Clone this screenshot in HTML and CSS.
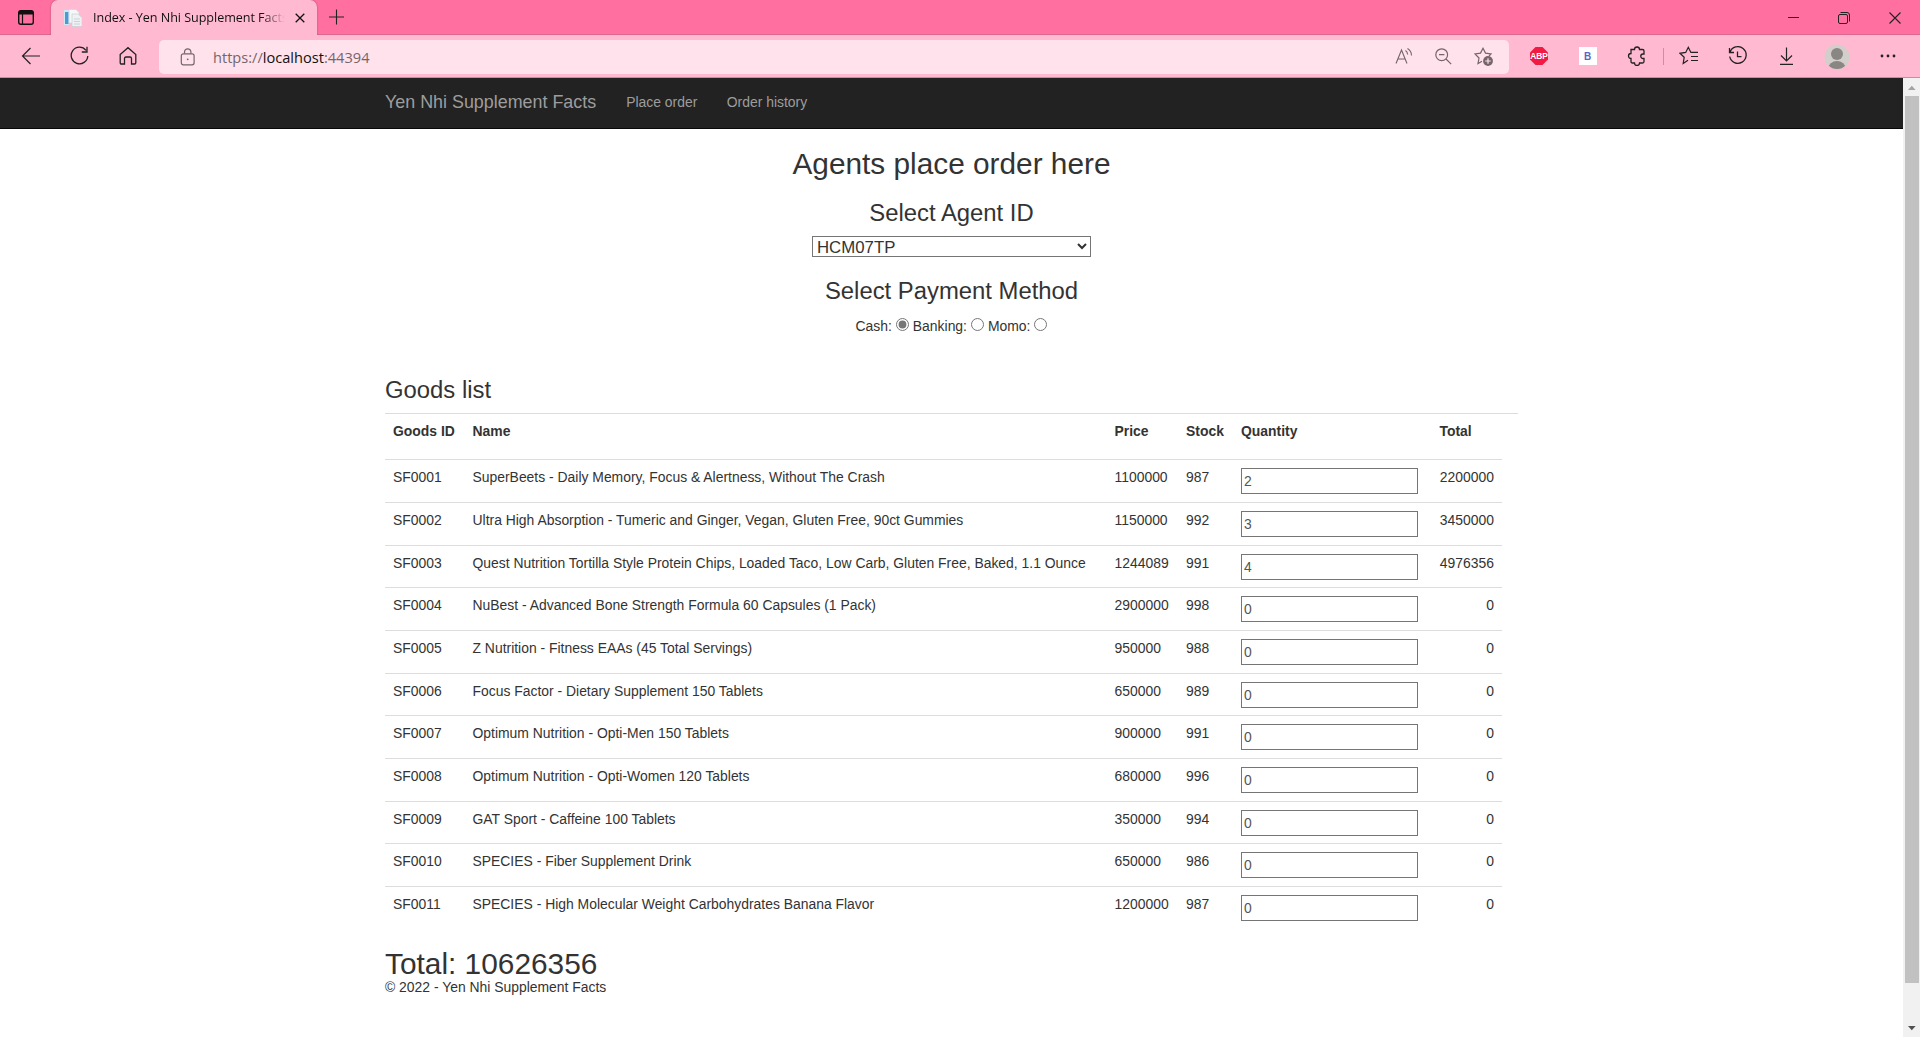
FILE: index.html
```html
<!DOCTYPE html>
<html lang="en">
<head>
<meta charset="utf-8">
<title>Index - Yen Nhi Supplement Facts</title>
<link rel="stylesheet" href="styles.css">
</head>
<body>
<div class="titlebar">
  <div class="tab-menu"><svg width="18" height="18" viewBox="0 0 18 18"><rect x="1.7" y="1.7" width="14.6" height="13.6" rx="2.2" fill="none" stroke="#111" stroke-width="1.4"/><path d="M1.5 5.5V4a2.5 2.5 0 0 1 2.5-2.5h10A2.5 2.5 0 0 1 16.5 4v1.5z" fill="#111"/><path d="M5.5 5v10" stroke="#111" stroke-width="1.2"/></svg></div>
  <div class="tab">
    <svg class="favicon" width="18" height="18" viewBox="0 0 18 18"><path d="M0 1h5v15H0z" fill="#cfe8f5"/><path d="M1 3h3.500v12H1z" fill="#4b9bd0"/><path d="M5 .5h7l3 3V14H5z" fill="#f5f7f8" stroke="#ccd5da" stroke-width=".6"/><path d="M8 5h6l4 3.500V17.500H8z" fill="#eef2f4" stroke="#c3ccd2" stroke-width=".6"/><path d="M10 10h6M10 12.500h6M10 15h6" stroke="#c9d4da"/></svg>
    <span class="tab-title">Index - Yen Nhi Supplement Facts</span>
    <svg class="tab-close" width="10" height="10" viewBox="0 0 10 10"><path d="M.7.7l8.600 8.600M9.300.7L.7 9.300" stroke="#111" stroke-width="1.300"/></svg>
  </div>
  <svg class="new-tab" width="16" height="16" viewBox="0 0 16 16"><path d="M7.500 .5v15M0 8h15" stroke="#222" stroke-width="1.100"/></svg>
  <div class="window-buttons">
    <svg width="12" height="12" viewBox="0 0 12 12"><path d="M1 5.500h11" stroke="#222"/></svg>
    <svg width="12" height="12" viewBox="0 0 12 12" fill="none" stroke="#222"><rect x=".5" y="2.500" width="9" height="9" rx="1.500"/><path d="M2.500.5H9A2.500 2.500 0 0 1 11.500 3v6.500"/></svg>
    <svg width="12" height="12" viewBox="0 0 12 12"><path d="M.5.5l11 11M11.500.5l-11 11" stroke="#222" stroke-width="1.100"/></svg>
  </div>
</div>
<div class="toolbar">
  <div class="nav-buttons">
    <svg width="20" height="20" viewBox="0 0 20 20" fill="none" stroke="#222" stroke-width="1.200"><path d="M19 10H1.500M9.500 2L1.500 10l8 8"/></svg>
    <svg width="20" height="20" viewBox="0 0 20 20" fill="none" stroke="#222" stroke-width="1.300"><path d="M16 4.300A8.300 8.300 0 1 0 17.800 10M17 .8v5.200h-5.200"/></svg>
    <svg width="20" height="20" viewBox="0 0 20 20" fill="none" stroke="#222" stroke-width="1.300"><path d="M2.200 8.500L10 1.700l7.800 6.800v8.200q0 1.300-1.300 1.300h-3v-5.500q0-1.500-1.500-1.500h-4q-1.500 0-1.500 1.500V18h-3q-1.300 0-1.300-1.300z"/></svg>
  </div>
  <div class="address">
    <svg class="lock" width="16" height="18" viewBox="0 0 16 18" fill="none" stroke="#75656b" stroke-width="1.200"><rect x="1.300" y="5.800" width="12.800" height="11" rx="2"/><path d="M4.500 5.500V4a3.200 3.200 0 0 1 6.400 0v1.500"/><circle cx="7.700" cy="11.300" r=".9" fill="#75656b" stroke="none"/></svg>
    <span class="url">https://<b>localhost</b>:44394</span>
    <div class="address-actions">
      <svg width="20" height="20" viewBox="0 0 20 20" fill="none" stroke="#75656b" stroke-width="1.100"><path d="M2 16.500L7.500 3l5.500 13.500M3.700 12h7.600M11.500 3.500q2 1.500 2.200 4M13.500 1.500q4 2.500 4 7"/></svg>
      <svg width="20" height="20" viewBox="0 0 20 20" fill="none" stroke="#75656b" stroke-width="1.200"><circle cx="7.700" cy="7.700" r="5.900"/><path d="M12 12l5.200 5.200M5 7.700h5.400"/></svg>
      <svg width="20" height="20" viewBox="0 0 20 20" fill="none" stroke="#75656b" stroke-width="1.200"><path d="M8 14.300L4 16.500l1-5.500L1 7l5.500-.9L9 1.300l2.500 4.800 5.500.9-2 2"/><circle cx="14" cy="14" r="4.900" fill="#75656b" stroke="none"/><path d="M14 11.200v5.600M11.200 14h5.600" stroke="#ffe2eb"/></svg>
    </div>
  </div>
  <div class="extensions">
    <div class="slot"><svg width="20" height="20" viewBox="0 0 20 20"><path d="M6.500 1h7l5.500 5.500v7L13.500 19h-7L1 13.500v-7z" fill="#f01a42"/><text x="10" y="13.300" text-anchor="middle" class="abp">ABP</text></svg></div>
    <div class="slot"><span class="ext-b">B</span></div>
    <div class="slot"><svg width="20" height="20" viewBox="0 0 20 20" fill="none" stroke="#222" stroke-width="1.300"><path d="M4 3.500h3.500a2.500 2.500 0 0 1 5 0H15.500q1.500 0 1.500 1.500v3h-1a2 2 0 0 0 0 4.500h1v3q0 1.500-1.500 1.500H12.500a2.500 2.500 0 0 1-5 0H5.500Q4 17 4 15.500V12.500a2.300 2.300 0 0 1 0-5z"/></svg></div>
    <div class="divider"></div>
    <div class="slot"><svg width="20" height="20" viewBox="0 0 20 20" fill="none" stroke="#222" stroke-width="1.200"><path d="M9 14.300L4.200 17.500l1-6.300L1 7.300l5.700-.9L9.300 1.300l2.600 5.100H19M12 10.500h7M12 14.500h7"/></svg></div>
    <div class="slot"><svg width="20" height="20" viewBox="0 0 20 20" fill="none" stroke="#222" stroke-width="1.300"><path d="M1.500 2v4.500H6M2 6.300A8.300 8.300 0 1 1 1.700 10.500M9.500 5.500v5.200h4"/></svg></div>
    <div class="slot"><svg width="20" height="20" viewBox="0 0 20 20" fill="none" stroke="#222" stroke-width="1.200"><path d="M9.500 1.500v13.500M4 9.500L9.500 15l5.500-5.500M3 18.300h13"/></svg></div>
    <div class="slot avatar"><svg width="26" height="26" viewBox="0 0 26 26"><defs><clipPath id="disc"><circle cx="13" cy="13" r="12"/></clipPath></defs><circle cx="13" cy="13" r="12.500" fill="#d2cecb"/><g fill="#898683" clip-path="url(#disc)"><circle cx="13" cy="10" r="6"/><ellipse cx="13" cy="24.500" rx="8.700" ry="7.500"/></g></svg></div>
    <div class="slot"><svg width="20" height="20" viewBox="0 0 20 20" fill="#222"><circle cx="5" cy="10" r="1.400"/><circle cx="11" cy="10" r="1.400"/><circle cx="17" cy="10" r="1.400"/></svg></div>
  </div>
</div>
<div class="viewport">
  <div class="page">
    <nav class="navbar"><div class="container nav-row">
      <a class="brand">Yen Nhi Supplement Facts</a><a class="link">Place order</a><a class="link">Order history</a>
    </div></nav>
    <main class="container">
      <section class="order-form">
        <h2>Agents place order here</h2>
        <h3>Select Agent ID</h3>
        <select class="agent"><option>HCM07TP</option></select>
        <h3 class="payment-heading">Select Payment Method</h3>
        <div class="payment">
          <label>Cash: <input type="radio" name="pay" checked></label>
          <label>Banking: <input type="radio" name="pay"></label>
          <label>Momo: <input type="radio" name="pay"></label>
        </div>
      </section>
      <h3 class="goods-heading">Goods list</h3>
      <table class="goods">
        <colgroup><col class="c-id"><col class="c-name"><col class="c-price"><col class="c-stock"><col class="c-qty"><col class="c-total"></colgroup>
        <thead><tr><th>Goods ID</th><th>Name</th><th>Price</th><th>Stock</th><th>Quantity</th><th>Total</th></tr></thead>
        <tbody>
          <tr><td>SF0001</td><td>SuperBeets - Daily Memory, Focus &amp; Alertness, Without The Crash</td><td>1100000</td><td>987</td><td><input class="qty" value="2"></td><td>2200000</td></tr>
          <tr><td>SF0002</td><td>Ultra High Absorption - Tumeric and Ginger, Vegan, Gluten Free, 90ct Gummies</td><td>1150000</td><td>992</td><td><input class="qty" value="3"></td><td>3450000</td></tr>
          <tr><td>SF0003</td><td>Quest Nutrition Tortilla Style Protein Chips, Loaded Taco, Low Carb, Gluten Free, Baked, 1.1 Ounce</td><td>1244089</td><td>991</td><td><input class="qty" value="4"></td><td>4976356</td></tr>
          <tr><td>SF0004</td><td>NuBest - Advanced Bone Strength Formula 60 Capsules (1 Pack)</td><td>2900000</td><td>998</td><td><input class="qty" value="0"></td><td>0</td></tr>
          <tr><td>SF0005</td><td>Z Nutrition - Fitness EAAs (45 Total Servings)</td><td>950000</td><td>988</td><td><input class="qty" value="0"></td><td>0</td></tr>
          <tr><td>SF0006</td><td>Focus Factor - Dietary Supplement 150 Tablets</td><td>650000</td><td>989</td><td><input class="qty" value="0"></td><td>0</td></tr>
          <tr><td>SF0007</td><td>Optimum Nutrition - Opti-Men 150 Tablets</td><td>900000</td><td>991</td><td><input class="qty" value="0"></td><td>0</td></tr>
          <tr><td>SF0008</td><td>Optimum Nutrition - Opti-Women 120 Tablets</td><td>680000</td><td>996</td><td><input class="qty" value="0"></td><td>0</td></tr>
          <tr><td>SF0009</td><td>GAT Sport - Caffeine 100 Tablets</td><td>350000</td><td>994</td><td><input class="qty" value="0"></td><td>0</td></tr>
          <tr><td>SF0010</td><td>SPECIES - Fiber Supplement Drink</td><td>650000</td><td>986</td><td><input class="qty" value="0"></td><td>0</td></tr>
          <tr><td>SF0011</td><td>SPECIES - High Molecular Weight Carbohydrates Banana Flavor</td><td>1200000</td><td>987</td><td><input class="qty" value="0"></td><td>0</td></tr>
        </tbody>
      </table>
      <div class="grand-total">Total: 10626356</div>
      <footer>© 2022 - Yen Nhi Supplement Facts</footer>
    </main>
  </div>
  <div class="scrollbar">
    <svg width="17" height="18" viewBox="0 0 17 18"><path d="M5 12l3.800-4.200L12.600 12z" fill="#a3a3a3"/></svg>
    <div class="thumb"></div>
    <svg class="down" width="17" height="18" viewBox="0 0 17 18"><path d="M5 7l3.800 4.200L12.600 7z" fill="#505050"/></svg>
  </div>
</div>
</body>
</html>
```
FILE: styles.css
```css
* { box-sizing: border-box; }
body { margin: 0; height: 1037px; overflow: hidden; display: flex; flex-direction: column; background: #fff; color: #333; font: 13.92px/20px "Liberation Sans", Arial, sans-serif; }
svg { display: block; flex: none; }
h2, h3 { margin: 0; font-weight: 400; }

/* Browser chrome */
.titlebar { height: 35px; flex: none; display: flex; background: #ff70a0; border-bottom: 1px solid #dc6890; font-family: "Open Sans", sans-serif; color: #111; }
.tab-menu { width: 51px; padding: 9px 0 0 17px; }
.tab { width: 266px; height: 35px; display: flex; align-items: flex-start; background: #ffbad1; border-radius: 7px 7px 0 0; box-shadow: 0 0 2px #a04468; clip-path: inset(0 -3px 0 -3px); }
.favicon { margin: 9px 0 0 13px; }
.tab-title { margin: 8px 0 0 11px; width: 192px; overflow: hidden; white-space: nowrap; font-size: 12.6px; line-height: 19px; letter-spacing: -.05px; -webkit-mask-image: linear-gradient(90deg, #000 88%, transparent); mask-image: linear-gradient(90deg, #000 88%, transparent); }
.tab-close { margin: 13px 0 0 10px; }
.new-tab { margin: 9px 0 0 12px; }
.window-buttons { margin-left: auto; padding: 12px 19px 0 0; display: flex; gap: 39px; }
.toolbar { height: 43px; flex: none; display: flex; align-items: flex-start; background: #ffbad1; border-bottom: 1px solid #c88ba0; }
.nav-buttons { width: 159px; padding: 11px 0 0 21px; display: flex; gap: 28.5px; }
.address { margin-top: 5px; width: 1350px; height: 34px; display: flex; background: #ffe2eb; border-radius: 5px; }
.lock { margin: 8px 0 0 21px; }
.url { margin-left: 17px; font: 14.6px/34px "Open Sans", sans-serif; color: #75656b; }
.url b { font-weight: 400; color: #111; }
.address-actions { margin-left: auto; padding: 7px 15px 0 0; display: flex; gap: 20px; }
.extensions { height: 42px; padding-left: 5px; display: flex; align-items: center; }
.slot { width: 49px; display: flex; justify-content: center; }
.avatar { margin: 2px 1px 0; }
.divider { width: 1px; height: 17px; background: #c98fa2; margin: 0 1px 0 1.5px; }
.abp { font: 700 8.4px "Liberation Sans", sans-serif; fill: #fff; }
.ext-b { width: 18px; height: 18px; background: #fff; color: #5c62c4; font: 700 10px/19px "Liberation Sans", sans-serif; text-align: center; }

/* Page */
.viewport { flex: 1; display: flex; min-height: 0; }
.page { flex: 1; }
.container { width: 1133px; margin: 0 auto; }
.navbar { height: 51px; background: #222; border-bottom: 1px solid #080808; }
.nav-row { display: flex; color: #9d9d9d; }
.brand { font-size: 17.9px; line-height: 48px; margin-right: 30px; }
.link { line-height: 49px; margin-right: 29.5px; }
.order-form { display: flex; flex-direction: column; align-items: center; padding-top: 18px; }
h2 { font-size: 29.8px; line-height: 33px; }
h3 { font-size: 23.85px; line-height: 26px; }
.order-form h2 + h3 { margin-top: 20px; }
.agent { margin-top: 10px; width: 279px; height: 21px; padding: 0 2px 2px 0; border: 1px solid #767676; border-radius: 0; background: #fff; color: #333; font: 16.8px "Liberation Sans", Arial, sans-serif; }
.payment-heading { margin-top: 21px; }
.payment { margin-top: 12px; height: 20px; display: flex; gap: 4px; }
.payment label { display: flex; gap: 4px; }
.payment input { margin: 2px 0 0; width: 13px; height: 13px; accent-color: #767676; }
.goods-heading { margin-top: 41px; height: 37px; border-bottom: 1px solid #ddd; }
.goods { width: 1117px; table-layout: fixed; border-collapse: separate; border-spacing: 0; }
.c-id { width: 79.5px; } .c-name { width: 642px; } .c-price { width: 71.5px; } .c-stock { width: 55px; } .c-qty { width: 198.5px; } .c-total { width: 70.5px; }
.goods th, .goods td { padding: 7px 8px; height: 43px; border-top: 1px solid #ddd; text-align: left; vertical-align: top; white-space: nowrap; }
.goods tr:nth-child(3n) td { height: 42px; }
.goods th { height: 45px; border-top: 0; }
.goods td:last-child { text-align: right; }
.goods td:nth-child(5) { padding: 8px 8px 0; line-height: 0; }
.qty { width: 177px; height: 26px; padding: 0 2px 1px; border: 1px solid #767676; border-radius: 0; font: 13.9px "Liberation Sans", Arial, sans-serif; color: #555; }
.grand-total { margin-top: 18px; font-size: 29.85px; line-height: 33px; }
footer { line-height: 14px; }
.scrollbar { width: 17px; display: flex; flex-direction: column; background: #f1f1f1; }
.thumb { height: 887px; margin: 0 1px 0 2px; background: #c1c1c1; }
.down { margin-top: auto; }
```
